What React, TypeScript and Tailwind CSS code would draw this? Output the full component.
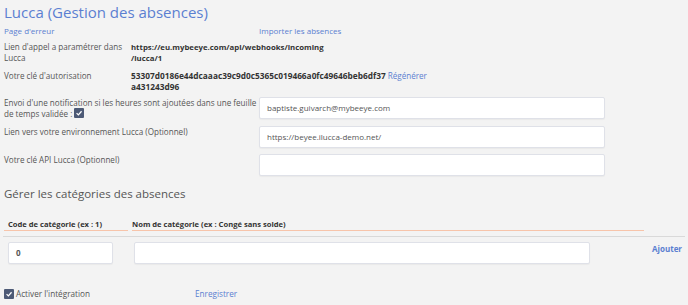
import React from 'react';

const font = { fontFamily: '"Open Sans", "Liberation Sans", sans-serif' };

const Check: React.FC<{ className?: string }> = ({ className }) => (
  <span
    className={
      'inline-flex items-center justify-center w-[10px] h-[10px] rounded-[1px] bg-[#4d5a76] align-middle ' +
      (className || '')
    }
  >
    <svg width="8" height="8" viewBox="0 0 10 10">
      <path d="M2 5.2 L4.2 7.3 L8.2 2.8" stroke="#fff" strokeWidth="1.6" fill="none" />
    </svg>
  </span>
);

const TextInput: React.FC<{ value?: string; className?: string }> = ({ value, className }) => (
  <div
    className={
      'h-[22px] bg-white border border-[#dfe1e8] rounded-[2px] shadow-[0_1px_1px_rgba(0,0,0,0.04)] flex items-center px-[7px] text-[8px] text-[#555] ' +
      (className || '')
    }
  >
    {value}
  </div>
);

export default function App() {
  return (
    <div style={font} className="w-[688px] h-[305px] bg-[#f3f3f3] overflow-hidden text-[#555] px-[4px]">
      <div className="h-[25px] flex items-center text-[15px] text-[#5b7fd1]">Lucca (Gestion des absences)</div>

      <div className="h-[12px] flex items-center text-[8px] text-[#5b7fd1]">
        <div className="w-[255px]">Page d'erreur</div>
        <div>Importer les absences</div>
      </div>

      <div className="mt-[5px] flex text-[8.1px] leading-[10.5px]">
        <div className="w-[127px]">
          Lien d'appel a paramétrer dans
          <br />
          Lucca
        </div>
        <div className="font-bold text-[#333] text-[7.8px]">
          https://eu.mybeeye.com/api/webhooks/incoming
          <br />
          /lucca/1
        </div>
      </div>

      <div className="mt-[8px] flex text-[8.1px] leading-[10.5px]">
        <div className="w-[127px]">Votre clé d'autorisation</div>
        <div>
          <span className="font-bold text-[#333] text-[8.3px]">53307d0186e44dcaaac39c9d0c5365c019466a0fc49646beb6df37</span>{' '}
          <span className="text-[#5b7fd1]">Régénérer</span>
          <br />
          <span className="font-bold text-[#333] text-[8.3px]">a431243d96</span>
        </div>
      </div>

      <div className="mt-[5px] h-[22px] flex text-[8.1px] leading-[10.5px]">
        <div className="w-[255px] h-[22px] pt-[1px] whitespace-nowrap">
          Envoi d'une notification si les heures sont ajoutées dans une feuille
          <br />
          de temps validée : <Check className="-mt-[2px]" />
        </div>
        <TextInput value="baptiste.guivarch@mybeeye.com" className="w-[346px]" />
      </div>

      <div className="mt-[7px] flex text-[8.1px] leading-[10.5px]">
        <div className="w-[255px] pt-[1px]">Lien vers votre environnement Lucca (Optionnel)</div>
        <TextInput value="https://beyee.ilucca-demo.net/" className="w-[346px]" />
      </div>

      <div className="mt-[6px] flex text-[8.1px] leading-[10.5px]">
        <div className="w-[255px] pt-[1px]">Votre clé API Lucca (Optionnel)</div>
        <TextInput className="w-[346px]" />
      </div>

      <div className="mt-[9px] h-[18px] flex items-center text-[11.5px] text-[#555]">
        Gérer les catégories des absences
      </div>

      <div className="mt-[16px] h-[12px] flex text-[7.6px] leading-[10px] font-bold text-[#333]">
        <div className="w-[124px] pl-[4px] border-b border-[#f7c4aa]">Code de catégorie (ex : 1)</div>
        <div className="w-[512px] ml-[4px] border-b border-[#f7c4aa]">Nom de catégorie (ex : Congé sans solde)</div>
      </div>
      <div className="mt-[5px] -mx-[1px] border-t border-[#d9d9d9]" />

      <div className="mt-[5px] flex items-start">
        <TextInput value="0" className="w-[105px] ml-[4px] font-bold text-[#333]" />
        <TextInput className="w-[456px] ml-[21px]" />
        <div className="ml-[62px] mt-[1px] text-[8px] font-bold text-[#5b7fd1]">Ajouter</div>
      </div>

      <div className="mt-[24px] flex items-center text-[8.2px]">
        <Check />
        <span className="ml-[2px] w-[179px]">Activer l'intégration</span>
        <span className="text-[#5b7fd1]">Enregistrer</span>
      </div>
    </div>
  );
}
